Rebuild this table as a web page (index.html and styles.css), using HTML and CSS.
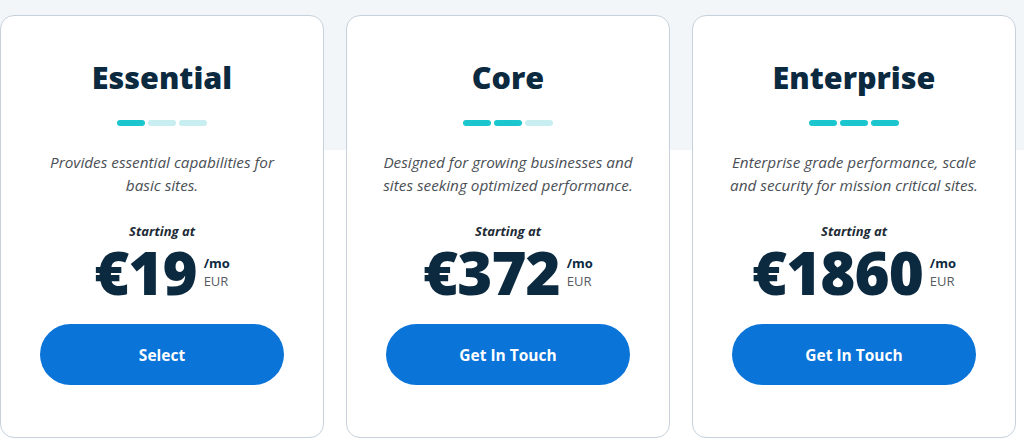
FILE: index.html
```html
<!DOCTYPE html>
<html lang="en">
<head>
<meta charset="utf-8">
<title>Pricing</title>
<link rel="stylesheet" href="styles.css">
</head>
<body>
<div class="plans">
  <div class="card">
    <h2 class="title">Essential</h2>
    <div class="level"><span class="dash on"></span><span class="dash"></span><span class="dash"></span></div>
    <p class="desc">Provides essential capabilities for basic sites.</p>
    <p class="starting">Starting at</p>
    <div class="price"><span class="amount">€19</span><span class="unit"><b>/mo</b><span>EUR</span></span></div>
    <a class="btn" href="#">Select</a>
  </div>
  <div class="card">
    <h2 class="title">Core</h2>
    <div class="level"><span class="dash on"></span><span class="dash on"></span><span class="dash"></span></div>
    <p class="desc">Designed for growing businesses and sites seeking optimized performance.</p>
    <p class="starting">Starting at</p>
    <div class="price"><span class="amount">€372</span><span class="unit"><b>/mo</b><span>EUR</span></span></div>
    <a class="btn" href="#">Get In Touch</a>
  </div>
  <div class="card">
    <h2 class="title">Enterprise</h2>
    <div class="level"><span class="dash on"></span><span class="dash on"></span><span class="dash on"></span></div>
    <p class="desc">Enterprise grade performance, scale and security for mission critical sites.</p>
    <p class="starting">Starting at</p>
    <div class="price"><span class="amount">€1860</span><span class="unit"><b>/mo</b><span>EUR</span></span></div>
    <a class="btn" href="#">Get In Touch</a>
  </div>
</div>
</body>
</html>
```
FILE: styles.css
```css
html, body {
  margin: 0;
  padding: 0;
}
body {
  font-family: "Open Sans", "Liberation Sans", sans-serif;
  background: linear-gradient(to bottom, #f3f6f9 0, #f3f6f9 150px, #ffffff 150px);
  min-height: 441px;
  color: #0c2a3f;
}
.plans {
  display: flex;
  gap: 22px;
  padding-top: 15px;
}
.card {
  box-sizing: border-box;
  width: 324px;
  height: 423px;
  background: #fff;
  border: 1px solid #c6d1dc;
  border-radius: 14px;
  display: flex;
  flex-direction: column;
  align-items: center;
  padding: 41px 32px 0;
}
.title {
  margin: 0;
  font-size: 30.5px;
  line-height: 40px;
  font-weight: 800;
  color: #0c2a3f;
}
.level {
  display: flex;
  gap: 3px;
  margin-top: 23px;
}
.dash {
  width: 28px;
  height: 6px;
  border-radius: 3px;
  background: #c9eef2;
}
.dash.on {
  background: #1bc6cf;
}
.desc {
  margin: 25px 0 0;
  font-size: 15.3px;
  line-height: 23px;
  font-style: italic;
  color: #4a4f55;
  text-align: center;
}
.starting {
  margin: 25px 0 0;
  font-size: 13px;
  line-height: 18px;
  font-weight: 700;
  font-style: italic;
  color: #1d2b36;
}
.price {
  display: flex;
  align-items: flex-start;
  margin-top: 8px;
  gap: 7px;
}
.amount {
  font-size: 60px;
  line-height: 48px;
  font-weight: 800;
  letter-spacing: -1px;
  color: #0c2a3f;
}
.unit {
  display: flex;
  flex-direction: column;
  margin-top: 6px;
  font-size: 13px;
  line-height: 18px;
  color: #555b61;
}
.unit b {
  font-weight: 700;
  color: #0c2a3f;
}
.btn {
  margin-top: 28px;
  width: 244px;
  height: 61px;
  border-radius: 31px;
  background: #0a74d9;
  color: #fff;
  text-decoration: none;
  font-size: 15.5px;
  font-weight: 700;
  display: flex;
  align-items: center;
  justify-content: center;
}
```
